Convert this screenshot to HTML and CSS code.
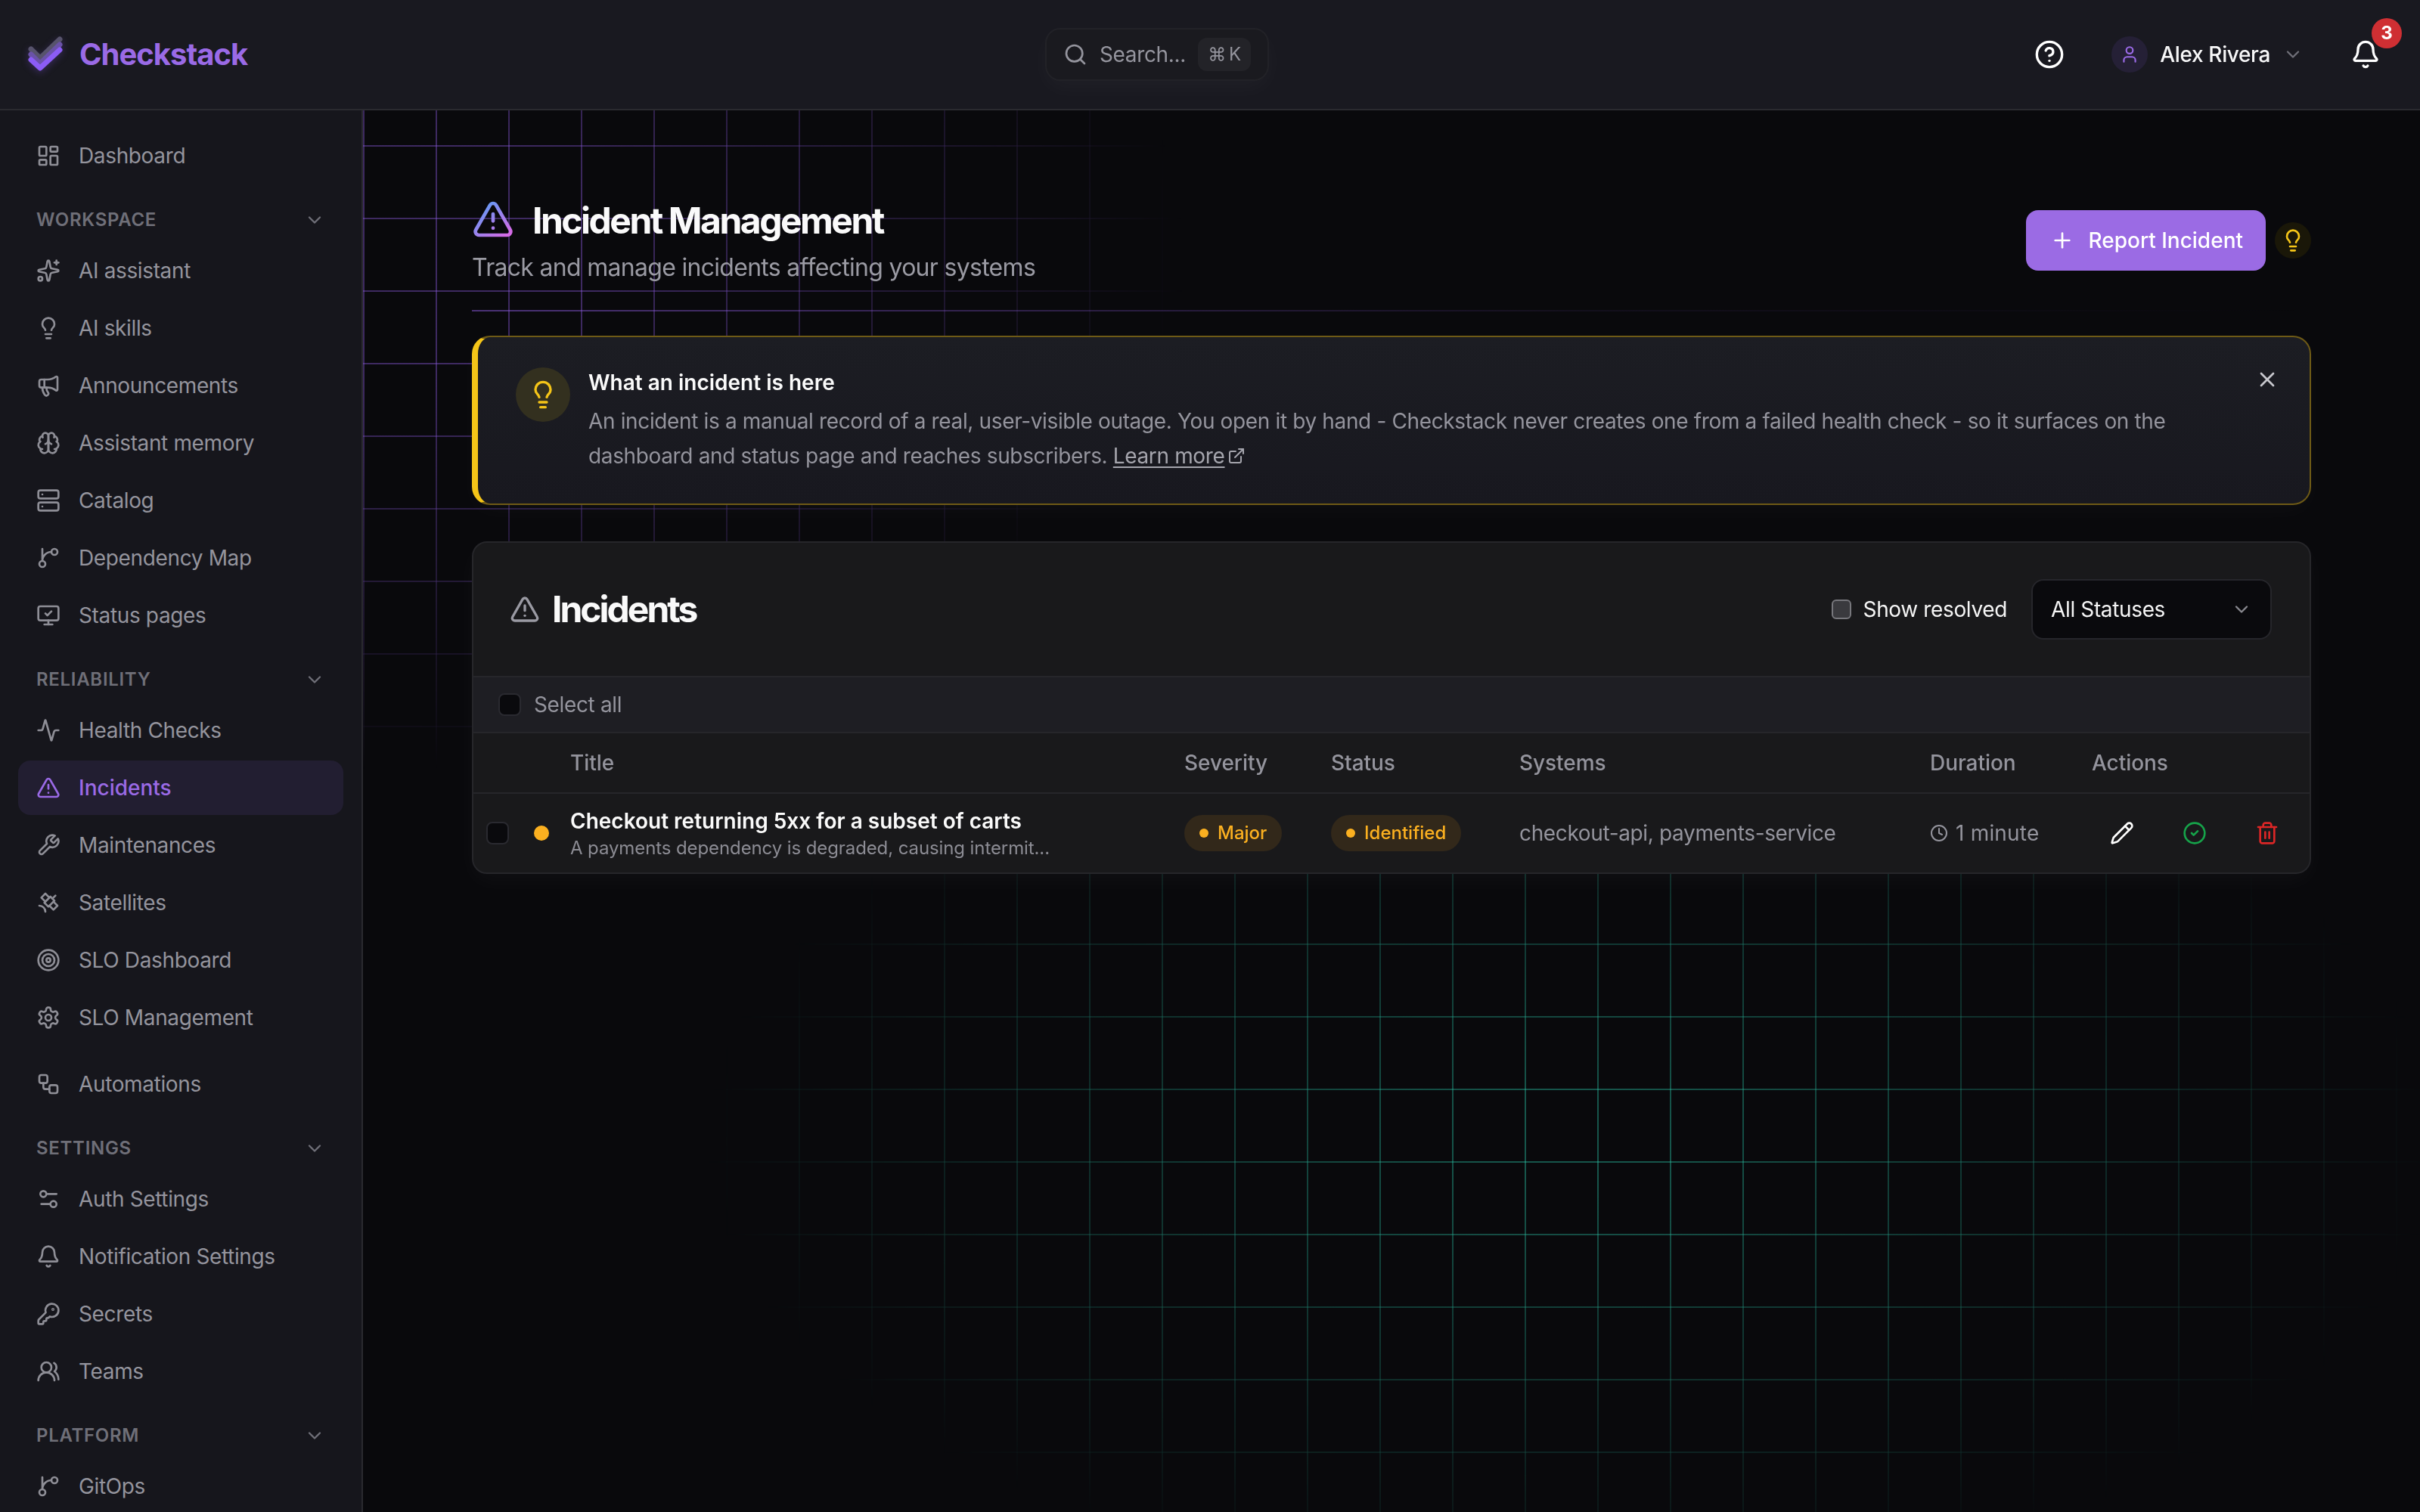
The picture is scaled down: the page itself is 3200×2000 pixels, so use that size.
FILE: index.html
```html
<!DOCTYPE html>
<html lang="en">
<head>
    <meta charset="UTF-8">
    <meta name="viewport" content="width=device-width, initial-scale=1.0">
    <title>Incident Management - Checkstack</title>
    <link rel="stylesheet" href="styles.css">
</head>
<body>
    <svg class="sprite" xmlns="http://www.w3.org/2000/svg">
      <defs>
        <linearGradient id="title-grad" gradientUnits="userSpaceOnUse" x1="6" y1="3" x2="20" y2="21">
          <stop offset="0" stop-color="#5f9bf5"/>
          <stop offset="1" stop-color="#d56be6"/>
        </linearGradient>
      </defs>
      <symbol id="i-dashboard" viewBox="0 0 24 24"><rect x="3" y="3" width="7" height="9" rx="1"/><rect x="14" y="3" width="7" height="5" rx="1"/><rect x="14" y="12" width="7" height="9" rx="1"/><rect x="3" y="16" width="7" height="5" rx="1"/></symbol>
      <symbol id="i-sparkles" viewBox="0 0 24 24"><path d="M11.017 2.814a1 1 0 0 1 1.966 0l1.051 5.558a2 2 0 0 0 1.594 1.594l5.558 1.051a1 1 0 0 1 0 1.966l-5.558 1.051a2 2 0 0 0-1.594 1.594l-1.051 5.558a1 1 0 0 1-1.966 0l-1.051-5.558a2 2 0 0 0-1.594-1.594l-5.558-1.051a1 1 0 0 1 0-1.966l5.558-1.051a2 2 0 0 0 1.594-1.594z"/><path d="M20 2v4"/><path d="M22 4h-4"/><circle cx="4" cy="20" r="2"/></symbol>
      <symbol id="i-bulb" viewBox="0 0 24 24"><path d="M15 14c.2-1 .7-1.7 1.5-2.5 1-.9 1.5-2.2 1.5-3.5A6 6 0 0 0 6 8c0 1 .2 2.2 1.5 3.5.7.7 1.3 1.5 1.5 2.5"/><path d="M9 18h6"/><path d="M10 22h4"/></symbol>
      <symbol id="i-megaphone" viewBox="0 0 24 24"><path d="M11 6a13 13 0 0 0 8.4-2.8A1 1 0 0 1 21 4v12a1 1 0 0 1-1.6.8A13 13 0 0 0 11 14H5a2 2 0 0 1-2-2V8a2 2 0 0 1 2-2z"/><path d="M6 14a12 12 0 0 0 2.4 7.2 2 2 0 0 0 3.2-2.4A8 8 0 0 1 10 14"/><path d="M8 6v8"/></symbol>
      <symbol id="i-brain" viewBox="0 0 24 24"><path d="M12 5a3 3 0 1 0-5.997.125 4 4 0 0 0-2.526 5.77 4 4 0 0 0 .556 6.588A4 4 0 1 0 12 18Z"/><path d="M12 5a3 3 0 1 1 5.997.125 4 4 0 0 1 2.526 5.77 4 4 0 0 1-.556 6.588A4 4 0 1 1 12 18Z"/><path d="M15 13a4.5 4.5 0 0 1-3-4 4.5 4.5 0 0 1-3 4"/><path d="M17.599 6.5a3 3 0 0 0 .399-1.375"/><path d="M6.003 5.125A3 3 0 0 0 6.401 6.5"/><path d="M3.477 10.896a4 4 0 0 1 .585-.396"/><path d="M19.938 10.5a4 4 0 0 1 .585.396"/><path d="M6 18a4 4 0 0 1-1.967-.516"/><path d="M19.967 17.484A4 4 0 0 1 18 18"/></symbol>
      <symbol id="i-server" viewBox="0 0 24 24"><rect x="2" y="2" width="20" height="8" rx="2"/><rect x="2" y="14" width="20" height="8" rx="2"/><path d="M6 6h.01"/><path d="M6 18h.01"/></symbol>
      <symbol id="i-branch" viewBox="0 0 24 24"><path d="M15 6a9 9 0 0 0-9 9V3"/><circle cx="18" cy="6" r="3"/><circle cx="6" cy="18" r="3"/></symbol>
      <symbol id="i-monitor" viewBox="0 0 24 24"><path d="m9 10 2 2 4-4"/><rect x="2" y="3" width="20" height="14" rx="2"/><path d="M12 17v4"/><path d="M8 21h8"/></symbol>
      <symbol id="i-activity" viewBox="0 0 24 24"><path d="M22 12h-2.48a2 2 0 0 0-1.93 1.46l-2.35 8.36a.25.25 0 0 1-.48 0L9.24 2.18a.25.25 0 0 0-.48 0l-2.35 8.36A2 2 0 0 1 4.49 12H2"/></symbol>
      <symbol id="i-alert" viewBox="0 0 24 24"><path d="m21.73 18-8-14a2 2 0 0 0-3.48 0l-8 14A2 2 0 0 0 4 21h16a2 2 0 0 0 1.73-3"/><path d="M12 9v4"/><path d="M12 17h.01"/></symbol>
      <symbol id="i-wrench" viewBox="0 0 24 24"><path d="M14.7 6.3a1 1 0 0 0 0 1.4l1.6 1.6a1 1 0 0 0 1.4 0l3.77-3.77a6 6 0 0 1-7.94 7.94l-6.91 6.91a2.12 2.12 0 0 1-3-3l6.91-6.91a6 6 0 0 1 7.94-7.94l-3.76 3.76z"/></symbol>
      <symbol id="i-satellite" viewBox="0 0 24 24"><path d="M13 7 9 3 5 7l4 4"/><path d="m17 11 4 4-4 4-4-4"/><path d="m8 12 4 4 6-6-4-4Z"/><path d="m16 8 3-3"/><path d="M9 21a6 6 0 0 0-6-6"/></symbol>
      <symbol id="i-target" viewBox="0 0 24 24"><circle cx="12" cy="12" r="10"/><circle cx="12" cy="12" r="6"/><circle cx="12" cy="12" r="2"/></symbol>
      <symbol id="i-settings" viewBox="0 0 24 24"><path d="M12.22 2h-.44a2 2 0 0 0-2 2v.18a2 2 0 0 1-1 1.73l-.43.25a2 2 0 0 1-2 0l-.15-.08a2 2 0 0 0-2.73.73l-.22.38a2 2 0 0 0 .73 2.73l.15.1a2 2 0 0 1 1 1.72v.51a2 2 0 0 1-1 1.74l-.15.09a2 2 0 0 0-.73 2.73l.22.38a2 2 0 0 0 2.73.73l.15-.08a2 2 0 0 1 2 0l.43.25a2 2 0 0 1 1 1.73V20a2 2 0 0 0 2 2h.44a2 2 0 0 0 2-2v-.18a2 2 0 0 1 1-1.73l.43-.25a2 2 0 0 1 2 0l.15.08a2 2 0 0 0 2.73-.73l.22-.39a2 2 0 0 0-.73-2.73l-.15-.08a2 2 0 0 1-1-1.74v-.5a2 2 0 0 1 1-1.74l.15-.09a2 2 0 0 0 .73-2.73l-.22-.38a2 2 0 0 0-2.73-.73l-.15.08a2 2 0 0 1-2 0l-.43-.25a2 2 0 0 1-1-1.73V4a2 2 0 0 0-2-2z"/><circle cx="12" cy="12" r="3"/></symbol>
      <symbol id="i-workflow" viewBox="0 0 24 24"><rect x="3" y="3" width="8" height="8" rx="2"/><path d="M7 11v4a2 2 0 0 0 2 2h4"/><rect x="13" y="13" width="8" height="8" rx="2"/></symbol>
      <symbol id="i-sliders" viewBox="0 0 24 24"><path d="M20 7h-9"/><path d="M14 17H5"/><circle cx="17" cy="17" r="3"/><circle cx="7" cy="7" r="3"/></symbol>
      <symbol id="i-bell" viewBox="0 0 24 24"><path d="M10.268 21a2 2 0 0 0 3.464 0"/><path d="M3.262 15.326A1 1 0 0 0 4 17h16a1 1 0 0 0 .74-1.673C19.41 13.956 18 12.499 18 8A6 6 0 0 0 6 8c0 4.499-1.411 5.956-2.738 7.326"/></symbol>
      <symbol id="i-key" viewBox="0 0 24 24"><path d="M2.586 17.414A2 2 0 0 0 2 18.828V21a1 1 0 0 0 1 1h3a1 1 0 0 0 1-1v-1a1 1 0 0 1 1-1h1a1 1 0 0 0 1-1v-1a1 1 0 0 1 1-1h.172a2 2 0 0 0 1.414-.586l.814-.814a6.5 6.5 0 1 0-4-4z"/><circle cx="16.5" cy="7.5" r=".5"/></symbol>
      <symbol id="i-users" viewBox="0 0 24 24"><path d="M18 21a8 8 0 0 0-16 0"/><circle cx="10" cy="8" r="5"/><path d="M22 20c0-3.37-2-6.5-4-8a5 5 0 0 0-.45-8.3"/></symbol>
      <symbol id="i-search" viewBox="0 0 24 24"><path d="m21 21-4.34-4.34"/><circle cx="11" cy="11" r="8"/></symbol>
      <symbol id="i-help" viewBox="0 0 24 24"><circle cx="12" cy="12" r="10"/><path d="M9.09 9a3 3 0 0 1 5.83 1c0 2-3 3-3 3"/><path d="M12 17h.01"/></symbol>
      <symbol id="i-user" viewBox="0 0 24 24"><path d="M19 21v-2a4 4 0 0 0-4-4H9a4 4 0 0 0-4 4v2"/><circle cx="12" cy="7" r="4"/></symbol>
      <symbol id="i-chevron" viewBox="0 0 24 24"><path d="m6 9 6 6 6-6"/></symbol>
      <symbol id="i-plus" viewBox="0 0 24 24"><path d="M5 12h14"/><path d="M12 5v14"/></symbol>
      <symbol id="i-x" viewBox="0 0 24 24"><path d="M18 6 6 18"/><path d="m6 6 12 12"/></symbol>
      <symbol id="i-external" viewBox="0 0 24 24"><path d="M15 3h6v6"/><path d="M10 14 21 3"/><path d="M18 13v6a2 2 0 0 1-2 2H5a2 2 0 0 1-2-2V8a2 2 0 0 1 2-2h6"/></symbol>
      <symbol id="i-clock" viewBox="0 0 24 24"><circle cx="12" cy="12" r="10"/><path d="M12 6v6l4 2"/></symbol>
      <symbol id="i-pencil" viewBox="0 0 24 24"><path d="M21.174 6.812a1 1 0 0 0-3.986-3.987L3.842 16.174a2 2 0 0 0-.5.83l-1.321 4.352a.5.5 0 0 0 .623.622l4.353-1.32a2 2 0 0 0 .83-.497z"/><path d="m15 5 4 4"/></symbol>
      <symbol id="i-check" viewBox="0 0 24 24"><circle cx="12" cy="12" r="10"/><path d="m9 12 2 2 4-4"/></symbol>
      <symbol id="i-trash" viewBox="0 0 24 24"><path d="M3 6h18"/><path d="M19 6v14c0 1-1 2-2 2H7c-1 0-2-1-2-2V6"/><path d="M8 6V4c0-1 1-2 2-2h4c1 0 2 1 2 2v2"/><path d="M10 11v6"/><path d="M14 11v6"/></symbol>
    </svg>

    <header class="topbar">
      <a class="brand">
        <svg class="brand-mark" viewBox="0 0 48 52">
          <path class="brand-top" d="M5 19 17 31 43 6"/>
          <path class="brand-mid" d="M5 26 17 38 43 13"/>
          <path class="brand-low" d="M5 33 17 44 43 20"/>
        </svg>
        <span class="brand-name">Checkstack</span>
      </a>
      <div class="topbar-center">
        <div class="search">
          <svg class="icon"><use href="#i-search"/></svg>
          <span class="search-text">Search...</span>
          <kbd class="search-kbd"><span>⌘</span><span>K</span></kbd>
        </div>
      </div>
      <div class="topbar-right">
        <svg class="icon icon-lg"><use href="#i-help"/></svg>
        <div class="user">
          <span class="avatar"><svg class="icon icon-sm"><use href="#i-user"/></svg></span>
          <span class="user-name">Alex Rivera</span>
          <svg class="icon chevron user-chevron"><use href="#i-chevron"/></svg>
        </div>
        <div class="bell">
          <svg class="icon icon-lg"><use href="#i-bell"/></svg>
          <span class="bell-badge">3</span>
        </div>
      </div>
    </header>

    <div class="shell">
      <aside class="sidebar">
        <a class="nav-item"><svg class="icon"><use href="#i-dashboard"/></svg>Dashboard</a>

        <div class="nav-title"><span>WORKSPACE</span><svg class="icon chevron"><use href="#i-chevron"/></svg></div>
        <nav class="nav-list">
          <a class="nav-item"><svg class="icon"><use href="#i-sparkles"/></svg>AI assistant</a>
          <a class="nav-item"><svg class="icon"><use href="#i-bulb"/></svg>AI skills</a>
          <a class="nav-item"><svg class="icon"><use href="#i-megaphone"/></svg>Announcements</a>
          <a class="nav-item"><svg class="icon"><use href="#i-brain"/></svg>Assistant memory</a>
          <a class="nav-item"><svg class="icon"><use href="#i-server"/></svg>Catalog</a>
          <a class="nav-item"><svg class="icon"><use href="#i-branch"/></svg>Dependency Map</a>
          <a class="nav-item"><svg class="icon"><use href="#i-monitor"/></svg>Status pages</a>
        </nav>

        <div class="nav-title"><span>RELIABILITY</span><svg class="icon chevron"><use href="#i-chevron"/></svg></div>
        <nav class="nav-list">
          <a class="nav-item"><svg class="icon"><use href="#i-activity"/></svg>Health Checks</a>
          <a class="nav-item active"><svg class="icon"><use href="#i-alert"/></svg>Incidents</a>
          <a class="nav-item"><svg class="icon"><use href="#i-wrench"/></svg>Maintenances</a>
          <a class="nav-item"><svg class="icon"><use href="#i-satellite"/></svg>Satellites</a>
          <a class="nav-item"><svg class="icon"><use href="#i-target"/></svg>SLO Dashboard</a>
          <a class="nav-item"><svg class="icon"><use href="#i-settings"/></svg>SLO Management</a>
        </nav>

        <a class="nav-item nav-single"><svg class="icon"><use href="#i-workflow"/></svg>Automations</a>

        <div class="nav-title"><span>SETTINGS</span><svg class="icon chevron"><use href="#i-chevron"/></svg></div>
        <nav class="nav-list">
          <a class="nav-item"><svg class="icon"><use href="#i-sliders"/></svg>Auth Settings</a>
          <a class="nav-item"><svg class="icon"><use href="#i-bell"/></svg>Notification Settings</a>
          <a class="nav-item"><svg class="icon"><use href="#i-key"/></svg>Secrets</a>
          <a class="nav-item"><svg class="icon"><use href="#i-users"/></svg>Teams</a>
        </nav>

        <div class="nav-title"><span>PLATFORM</span><svg class="icon chevron"><use href="#i-chevron"/></svg></div>
        <nav class="nav-list">
          <a class="nav-item"><svg class="icon"><use href="#i-branch"/></svg>GitOps</a>
        </nav>
      </aside>

      <main class="main">
        <div class="page-head">
          <div>
            <h1 class="page-title"><svg class="icon title-icon"><use href="#i-alert"/></svg>Incident Management</h1>
            <p class="page-sub">Track and manage incidents affecting your systems</p>
          </div>
          <div class="page-actions">
            <button class="btn-primary"><svg class="icon"><use href="#i-plus"/></svg>Report Incident</button>
            <span class="tip-toggle"><svg class="icon"><use href="#i-bulb"/></svg></span>
          </div>
        </div>

        <section class="callout">
          <span class="callout-icon"><svg class="icon"><use href="#i-bulb"/></svg></span>
          <div class="callout-body">
            <h2>What an incident is here</h2>
            <p>An incident is a manual record of a real, user-visible outage. You open it by hand - Checkstack never creates one from a failed health check - so it surfaces on the<br>dashboard and status page and reaches subscribers. <a class="learn-more">Learn more</a> <svg class="icon external"><use href="#i-external"/></svg></p>
          </div>
          <svg class="icon callout-close"><use href="#i-x"/></svg>
        </section>

        <section class="card">
          <div class="card-head">
            <h2 class="card-title"><svg class="icon"><use href="#i-alert"/></svg>Incidents</h2>
            <div class="card-tools">
              <label class="show-resolved"><input type="checkbox" class="check-muted">Show resolved</label>
              <div class="select"><span>All Statuses</span><svg class="icon"><use href="#i-chevron"/></svg></div>
            </div>
          </div>

          <div class="select-all">
            <input type="checkbox" class="check">
            <span>Select all</span>
          </div>

          <div class="table-row table-head">
            <span></span>
            <span>Title</span>
            <span>Severity</span>
            <span>Status</span>
            <span>Systems</span>
            <span>Duration</span>
            <span>Actions</span>
          </div>

          <div class="table-row incident">
            <div class="incident-lead">
              <input type="checkbox" class="check">
              <span class="severity-dot"></span>
            </div>
            <div class="incident-main">
              <div class="incident-title">Checkout returning 5xx for a subset of carts</div>
              <div class="incident-desc">A payments dependency is degraded, causing intermit...</div>
            </div>
            <div><span class="badge">Major</span></div>
            <div><span class="badge">Identified</span></div>
            <div>checkout-api, payments-service</div>
            <div class="duration"><svg class="icon"><use href="#i-clock"/></svg>1 minute</div>
            <div class="actions">
              <span class="action action-edit"><svg class="icon"><use href="#i-pencil"/></svg></span>
              <span class="action action-resolve"><svg class="icon"><use href="#i-check"/></svg></span>
              <span class="action action-delete"><svg class="icon"><use href="#i-trash"/></svg></span>
            </div>
          </div>
        </section>
      </main>
    </div>
</body>
</html>
```

FILE: styles.css
```css
* {
    margin: 0;
    padding: 0;
    box-sizing: border-box;
}

html,
body {
    height: 100%;
}

body {
    display: flex;
    flex-direction: column;
    overflow: hidden;
    background-color: #09090c;
    color: #94949d;
    font-family: Inter, "Liberation Sans", sans-serif;
    font-size: 28px;
    line-height: 40px;
    letter-spacing: -0.36px;
}

/* two tinted grids behind the content */
body::before,
body::after {
    content: "";
    position: fixed;
    inset: 0;
    background-size: 96px 96px;
    pointer-events: none;
}

body::before {
    background-image:
        linear-gradient(rgba(142, 92, 226, 0.4) 2px, transparent 2px),
        linear-gradient(90deg, rgba(142, 92, 226, 0.4) 2px, transparent 2px);
    -webkit-mask-image: radial-gradient(ellipse 1050px 680px at 520px 340px, #000 25%, transparent 100%);
    mask-image: radial-gradient(ellipse 1050px 680px at 520px 340px, #000 25%, transparent 100%);
}

body::after {
    background-image:
        linear-gradient(rgba(45, 212, 180, 0.38) 2px, transparent 2px),
        linear-gradient(90deg, rgba(45, 212, 180, 0.38) 2px, transparent 2px);
    -webkit-mask-image: radial-gradient(ellipse 1150px 600px at 2080px 1510px, #000 10%, transparent 100%);
    mask-image: radial-gradient(ellipse 1150px 600px at 2080px 1510px, #000 10%, transparent 100%);
}

.sprite {
    position: absolute;
    width: 0;
    height: 0;
}

.icon {
    flex-shrink: 0;
    width: 32px;
    height: 32px;
    fill: none;
    stroke: currentColor;
    stroke-width: 2;
    stroke-linecap: round;
    stroke-linejoin: round;
}

.icon-lg {
    width: 40px;
    height: 40px;
}

.icon-sm {
    width: 26px;
    height: 26px;
}

.chevron {
    width: 28px;
    height: 28px;
    color: #6f6f78;
}

/* top bar */
.topbar {
    position: relative;
    z-index: 2;
    display: flex;
    align-items: center;
    flex-shrink: 0;
    height: 146px;
    background-color: #191920;
    border-bottom: 2px solid #2a2a2f;
}

.brand {
    display: flex;
    align-items: center;
    width: 480px;
    padding-left: 36px;
}

.brand-mark {
    width: 48px;
    height: 52px;
    margin-right: 21px;
    fill: none;
    stroke-width: 7;
    stroke-linecap: round;
    stroke-linejoin: round;
    filter: drop-shadow(0 3px 5px rgba(139, 92, 246, 0.25));
}

.brand-top {
    stroke: #57536c;
}

.brand-mid {
    stroke: #6a52a8;
}

.brand-low {
    stroke: #8b5cf6;
}

.brand-name {
    color: #9a6ae6;
    font-size: 40px;
    font-weight: 700;
    letter-spacing: -1px;
}

.topbar-center {
    display: flex;
    justify-content: center;
    flex: 1;
}

.search {
    display: flex;
    align-items: center;
    width: 296px;
    height: 70px;
    padding: 0 22px;
    background-color: #1a1a1f;
    border: 2px solid #222227;
    border-radius: 20px;
    box-shadow: 0 10px 30px rgba(255, 255, 255, 0.03);
}

.search-text {
    margin-left: 16px;
    color: #94949d;
}

.search-kbd {
    display: flex;
    justify-content: center;
    align-items: center;
    gap: 4px;
    width: 70px;
    height: 44px;
    margin-left: auto;
    background-color: #232328;
    border-radius: 12px;
    font-family: Inter, "DejaVu Sans", sans-serif;
    font-size: 24px;
}

.topbar-right {
    display: flex;
    justify-content: flex-end;
    align-items: center;
    gap: 62px;
    width: 620px;
    padding-right: 52px;
    color: #fff;
}

.user {
    display: flex;
    align-items: center;
}

.avatar {
    display: flex;
    justify-content: center;
    align-items: center;
    width: 48px;
    height: 48px;
    background-color: #252036;
    border-radius: 50%;
    color: #9a6ae6;
}

.user-name {
    margin-left: 16px;
    color: #f7f7f8;
    font-weight: 500;
}

.user-chevron {
    margin-left: 16px;
}

.bell {
    position: relative;
    display: flex;
}

.bell-badge {
    position: absolute;
    top: -28px;
    left: 28px;
    width: 40px;
    height: 40px;
    background-color: #cf2f33;
    border-radius: 50%;
    color: #fff;
    font-size: 24px;
    font-weight: 700;
    line-height: 40px;
    letter-spacing: 0;
    text-align: center;
}

/* sidebar */
.shell {
    position: relative;
    z-index: 1;
    display: flex;
    flex: 1;
    min-height: 0;
}

.sidebar {
    flex-shrink: 0;
    width: 480px;
    padding: 24px 24px 0;
    overflow: hidden;
    background-color: #16161c;
    border-right: 2px solid #2a2a2f;
}

.nav-list {
    display: flex;
    flex-direction: column;
    gap: 4px;
}

.nav-item {
    display: flex;
    align-items: center;
    gap: 24px;
    height: 72px;
    padding-left: 24px;
    border-radius: 16px;
}

.nav-item .icon {
    color: #8e8e96;
}

.nav-item.active {
    background-color: #221e31;
    color: #9a6ae6;
    font-weight: 500;
    letter-spacing: 0;
}

.nav-item.active .icon {
    color: #9a6ae6;
}

.nav-single {
    margin-top: 16px;
}

.nav-title {
    display: flex;
    justify-content: space-between;
    align-items: center;
    height: 62px;
    margin-top: 18px;
    padding: 0 24px;
    color: #6f6f78;
    font-size: 24px;
    font-weight: 600;
    letter-spacing: 0.7px;
}

/* main column */
.main {
    flex: 1;
    padding: 112px 144px 0;
}

.page-head {
    display: flex;
    justify-content: space-between;
    align-items: center;
    padding-bottom: 32px;
    border-bottom: 2px solid transparent;
    border-image: linear-gradient(90deg, rgba(142, 92, 226, 0.5), rgba(142, 92, 226, 0.08) 60%, transparent) 1;
}

.page-title {
    display: flex;
    align-items: center;
    gap: 24px;
    margin-top: 2px;
    color: #fafafa;
    font-size: 48px;
    font-weight: 700;
    line-height: 64px;
    letter-spacing: -2.5px;
}

.title-icon {
    width: 56px;
    height: 56px;
    margin-top: -4px;
    stroke: url(#title-grad);
}

.page-sub {
    margin-top: 6px;
    color: #9a9aa3;
    font-size: 32px;
    line-height: 48px;
    letter-spacing: -0.7px;
}

.page-actions {
    display: flex;
    align-items: center;
    gap: 12px;
}

.btn-primary {
    display: flex;
    align-items: center;
    gap: 18px;
    height: 80px;
    padding: 0 30px 0 32px;
    background-color: #9b6be4;
    border: none;
    border-radius: 16px;
    color: #fff;
    font: inherit;
    font-weight: 500;
    letter-spacing: 0;
}

.tip-toggle {
    display: flex;
    justify-content: center;
    align-items: center;
    width: 48px;
    height: 48px;
    background-color: #1a1708;
    border-radius: 50%;
    color: #f5c518;
}

/* callout */
.callout {
    display: flex;
    gap: 24px;
    margin-top: 32px;
    padding: 40px 40px 40px 50px;
    background: linear-gradient(180deg, #1c1d23, #18181f);
    border: 2px solid #6e5a16;
    border-left: 8px solid #f5c518;
    border-radius: 24px;
    box-shadow: 0 10px 30px rgba(255, 255, 255, 0.025);
}

.callout-icon {
    display: flex;
    justify-content: center;
    align-items: center;
    flex-shrink: 0;
    width: 72px;
    height: 72px;
    background-color: #33301f;
    border-radius: 50%;
    color: #f5c518;
}

.callout-icon .icon {
    width: 40px;
    height: 40px;
}

.callout-body {
    flex: 1;
}

.callout-body h2 {
    color: #fafafa;
    font-size: 28px;
    font-weight: 600;
    line-height: 40px;
    letter-spacing: 0;
}

.callout-body p {
    margin-top: 8px;
    line-height: 46px;
}

.learn-more {
    color: #a5a5ad;
    text-decoration: underline;
    text-underline-offset: 4px;
}

.external {
    width: 24px;
    height: 24px;
    margin-left: -4px;
    vertical-align: -2px;
    color: #a5a5ad;
}

.callout-close {
    color: #c8c8ce;
}

/* incidents card */
.card {
    margin-top: 48px;
    background-color: #19191b;
    border: 2px solid #26262a;
    border-radius: 20px;
    box-shadow: 0 10px 30px rgba(255, 255, 255, 0.03);
}

.card-head {
    display: flex;
    justify-content: space-between;
    align-items: center;
    height: 178px;
    padding: 0 50px 0 48px;
    border-bottom: 2px solid #26262a;
}

.card-title {
    display: flex;
    align-items: center;
    gap: 16px;
    color: #fafafa;
    font-size: 48px;
    font-weight: 700;
    line-height: 64px;
    letter-spacing: -3px;
}

.card-title .icon {
    width: 40px;
    height: 40px;
    color: #9a9aa3;
}

.card-tools {
    display: flex;
    align-items: center;
    gap: 32px;
}

.show-resolved {
    display: flex;
    align-items: center;
    gap: 16px;
    color: #f5f5f5;
}

.check,
.check-muted {
    flex-shrink: 0;
    appearance: none;
    -webkit-appearance: none;
    border-radius: 8px;
}

.check {
    width: 30px;
    height: 30px;
    background-color: #0a0a0d;
    border: 2px solid #2a2a30;
}

.check-muted {
    width: 26px;
    height: 26px;
    background-color: #3a3a3e;
    border: 2px solid #77777c;
    border-radius: 6px;
}

.select {
    display: flex;
    justify-content: space-between;
    align-items: center;
    width: 318px;
    height: 80px;
    padding: 0 24px;
    background-color: #0a0a0d;
    border: 2px solid #26262b;
    border-radius: 16px;
    color: #f5f5f5;
}

.select .icon {
    width: 28px;
    height: 28px;
    color: #8a8a90;
}

.select-all {
    display: flex;
    align-items: center;
    gap: 17px;
    height: 74px;
    padding-left: 33px;
    background-color: #1e1e23;
    border-bottom: 2px solid #26262a;
}

.table-row {
    display: grid;
    grid-template-columns: 128px 812px 194px 249px 543px 214px 1fr;
    align-items: center;
}

.table-head {
    height: 80px;
    font-weight: 500;
    letter-spacing: -0.05px;
    border-bottom: 2px solid #26262a;
}

.incident {
    height: 104px;
}

.incident-lead {
    display: flex;
    align-items: center;
    gap: 33px;
    padding-left: 17px;
}

.severity-dot {
    width: 20px;
    height: 20px;
    background-color: #fbb020;
    border-radius: 50%;
}

.incident-main {
    padding-top: 2px;
}

.incident-title {
    color: #fafafa;
    font-weight: 600;
    line-height: 36px;
    letter-spacing: 0;
}

.incident-desc {
    margin-top: 2px;
    color: #8c8c94;
    font-size: 24px;
    line-height: 32px;
    letter-spacing: -0.1px;
}

.badge {
    display: inline-flex;
    align-items: center;
    gap: 12px;
    height: 48px;
    padding: 0 20px;
    background-color: #32281a;
    border-radius: 24px;
    color: #fbb020;
    font-size: 24px;
    font-weight: 500;
    letter-spacing: 0;
}

.badge::before {
    content: "";
    width: 12px;
    height: 12px;
    background-color: #fbb020;
    border-radius: 50%;
}

.duration {
    display: flex;
    align-items: center;
    gap: 10px;
    letter-spacing: 0.2px;
}

.duration .icon {
    width: 24px;
    height: 24px;
}

.actions {
    display: flex;
    gap: 16px;
}

.action {
    display: flex;
    justify-content: center;
    align-items: center;
    width: 80px;
    height: 64px;
}

.action-edit {
    color: #fff;
}

.action-resolve {
    color: #16a34a;
}

.action-delete {
    color: #dc2626;
}
```
